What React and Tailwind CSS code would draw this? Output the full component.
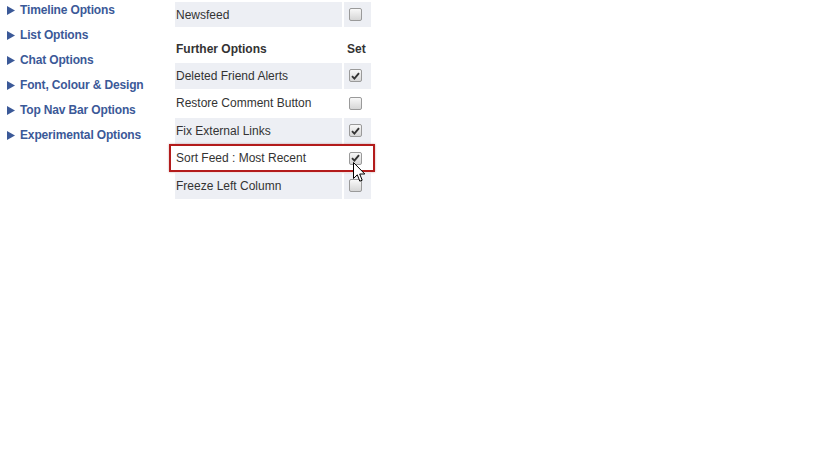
import React from 'react';

const navItems = [
  'Timeline Options',
  'List Options',
  'Chat Options',
  'Font, Colour & Design',
  'Top Nav Bar Options',
  'Experimental Options',
];

const rows = [
  { label: 'Deleted Friend Alerts', checked: true, shaded: true },
  { label: 'Restore Comment Button', checked: false, shaded: false },
  { label: 'Fix External Links', checked: true, shaded: true },
  { label: 'Sort Feed : Most Recent', checked: true, shaded: false, highlight: true },
  { label: 'Freeze Left Column', checked: false, shaded: true },
];

function Checkbox({ checked }) {
  return (
    <div className="w-[13px] h-[13px] rounded-[2px] border border-[#9a9a9a] bg-gradient-to-b from-[#f8f8f8] to-[#d6d6d6] flex items-center justify-center">
      {checked && (
        <svg width="9" height="8" viewBox="0 0 9 8">
          <path d="M1 4.2 L3.4 6.6 L8 1.2" fill="none" stroke="#333" strokeWidth="1.9" />
        </svg>
      )}
    </div>
  );
}

function Cursor() {
  return (
    <svg
      className="absolute left-[353px] top-[162px]"
      width="13"
      height="21"
      viewBox="0 0 13 21"
    >
      <path
        d="M0.5 0.5 L0.5 16.5 L4.3 12.8 L6.8 19.2 L9.2 18.2 L6.7 12 L11.8 12 Z"
        fill="#fff"
        stroke="#000"
        strokeWidth="1"
      />
    </svg>
  );
}

export default function App() {
  return (
    <div className="relative w-[819px] h-[460px] bg-white font-['Liberation_Sans',Arial,sans-serif] text-[12px]">
      <div className="flex">
        {/* left menu */}
        <div className="w-[175px] pl-[7px] flex flex-col gap-[5px]">
          {navItems.map((name) => (
            <div key={name} className="h-[20px] flex items-center gap-[5px] text-[#3b5998] font-bold tracking-[-0.15px]">
              <svg width="8" height="9" viewBox="0 0 8 9">
                <path d="M0 0 L8 4.5 L0 9 Z" fill="#3b5998" />
              </svg>
              <span>{name}</span>
            </div>
          ))}
        </div>

        {/* options table */}
        <div className="pt-[2px] grid grid-cols-[167px_27px] gap-x-[2px] gap-y-[2px] text-[#333]">
          <div className="h-[25px] bg-[#edeff4] flex items-center pl-[1px]">Newsfeed</div>
          <div className="h-[25px] bg-[#edeff4] flex items-center pl-[5px]">
            <Checkbox checked={false} />
          </div>

          <div className="h-[32px] flex items-center pt-[8px] pl-[1px] font-bold">Further Options</div>
          <div className="h-[32px] flex items-center pt-[8px] pl-[3px] font-bold">Set</div>

          {rows.map((r) => (
            <React.Fragment key={r.label}>
              <div className={`relative h-[25.5px] flex items-center pl-[1px] ${r.shaded ? 'bg-[#edeff4]' : ''}`}>
                {r.highlight && (
                  <div className="absolute left-[-6px] top-[-1.5px] w-[206px] h-[28px] border-2 border-[#b31b1b] shadow-[0_0_2px_rgba(120,0,0,0.35)]" />
                )}
                <span className="relative">{r.label}</span>
              </div>
              <div className={`h-[25.5px] flex items-center pl-[5px] ${r.shaded ? 'bg-[#edeff4]' : ''}`}>
                <Checkbox checked={r.checked} />
              </div>
            </React.Fragment>
          ))}
        </div>
      </div>
      <Cursor />
    </div>
  );
}
